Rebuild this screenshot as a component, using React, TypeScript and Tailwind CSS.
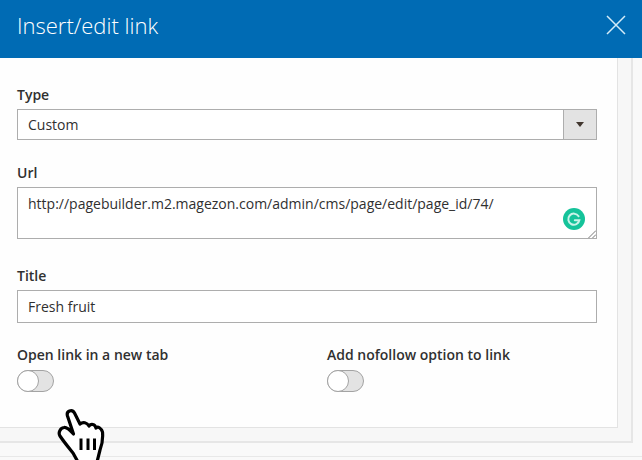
import React from 'react';

const Toggle: React.FC = () => (
  <div className="relative h-[22px] w-[37px] rounded-full border border-[#a3a3a3] bg-[#e3e3e3]">
    <div className="absolute -left-px -top-px h-[22px] w-[22px] rounded-full border border-[#a3a3a3] bg-white" />
  </div>
);

const GrammarlyBadge: React.FC = () => (
  <div className="absolute right-[11px] top-[20px] flex h-[22px] w-[22px] items-center justify-center rounded-full bg-[#15c39a]">
    <svg viewBox="0 0 22 22" className="h-[22px] w-[22px]" fill="none">
      <path d="M15.6 8.2A5.6 5.6 0 1 0 16.4 12.2H11.8" stroke="#c9f3e8" strokeWidth="2" strokeLinecap="round" />
      <path d="M13.6 14.6l2.4-2.2-.2 3z" fill="#c9f3e8" />
    </svg>
  </div>
);

const HandCursor: React.FC = () => (
  <svg viewBox="0 0 70 60" className="absolute left-[45px] top-[400px] h-[60px] w-[70px]" fill="none">
    <path
      d="M33 62L28 53C24 48 19 42 15 36C13 33 15 28 19 27.500C22 27 25 30 28.500 34L22.500 16C21 11 27 8.500 29.500 13L35 24C38 21.500 42 22.500 44 26C46 23.500 50 24 51 28C53 26 56 28 57.500 32C58 38 57 45 55 50L52 62z"
      fill="white"
      stroke="black"
      strokeWidth="3.200"
      strokeLinejoin="round"
    />
    <path d="M36 38.500V50M43 38.500V50M49.500 38.500V50" stroke="black" strokeWidth="3" />
  </svg>
);

export default function App() {
  return (
    <div className="relative h-[460px] w-[642px] overflow-hidden bg-[#f9f9f9] font-['Open_Sans',sans-serif] text-[#303030]">
      {/* Stacked slide-out panels behind the dialog */}
      <div className="h-[457px] border-b border-[#e8e8e8]">
        <div className="h-[443px] w-[633px] border-b-2 border-r-2 border-[#e6e6e6] bg-[#f7f7f7]">
          <div className="flex h-[428px] w-[618px] flex-col border-b border-r border-[#e3e3e3] bg-[#fefefe]">
            <header className="flex h-[58px] w-[642px] shrink-0 items-center justify-between bg-[#006bb4] pl-[17px] pr-[16px]">
              <h1 className="relative top-[-4px] text-[22px] font-light text-white">Insert/edit link</h1>
              <svg viewBox="0 0 20 20" className="relative top-[-4px] h-5 w-5" fill="none" stroke="#d5ecf8" strokeWidth="1.500">
                <path d="M1 1L19 19M19 1L1 19" />
              </svg>
            </header>

            <div className="flex flex-col px-[17px] pt-[27px]">
              <label className="text-[14px] font-semibold leading-[20px]">Type</label>
              <div className="mt-[4px] flex h-[31px] w-[580px] border border-[#adadad] bg-white">
                <span className="flex-1 pl-[10px] text-[14px] leading-[29px]">Custom</span>
                <div className="flex w-[33px] items-center justify-center border-l border-[#adadad] bg-[#e3e3e3]">
                  <div className="h-0 w-0 border-x-[4px] border-t-[5px] border-x-transparent border-t-[#41362f]" />
                </div>
              </div>

              <label className="mt-[23px] text-[14px] font-semibold leading-[20px]">Url</label>
              <div className="relative mt-[4px] h-[52px] w-[580px] border border-[#adadad] bg-white">
                <span className="block pl-[10px] pt-[6px] text-[14px] leading-[20px]">
                  http://pagebuilder.m2.magezon.com/admin/cms/page/edit/page_id/74/
                </span>
                <GrammarlyBadge />
                <svg viewBox="0 0 8 8" className="absolute bottom-0 right-0 h-2 w-2" fill="none" stroke="#555" strokeWidth="0.800">
                  <path d="M0.500 8L8 0.500M4.500 8L8 4.500" />
                </svg>
              </div>

              <label className="mt-[27px] text-[14px] font-semibold leading-[20px]">Title</label>
              <div className="mt-[4px] h-[33px] w-[580px] border border-[#adadad] bg-white pl-[10px] text-[14px] leading-[31px]">
                Fresh fruit
              </div>

              <div className="mt-[22px] flex">
                <div className="w-[310px]">
                  <div className="text-[14px] font-semibold leading-[20px]">Open link in a new tab</div>
                  <div className="mt-[5px]"><Toggle /></div>
                </div>
                <div>
                  <div className="text-[14px] font-semibold leading-[20px]">Add nofollow option to link</div>
                  <div className="mt-[5px]"><Toggle /></div>
                </div>
              </div>
            </div>
          </div>
        </div>
      </div>
      <HandCursor />
    </div>
  );
}
